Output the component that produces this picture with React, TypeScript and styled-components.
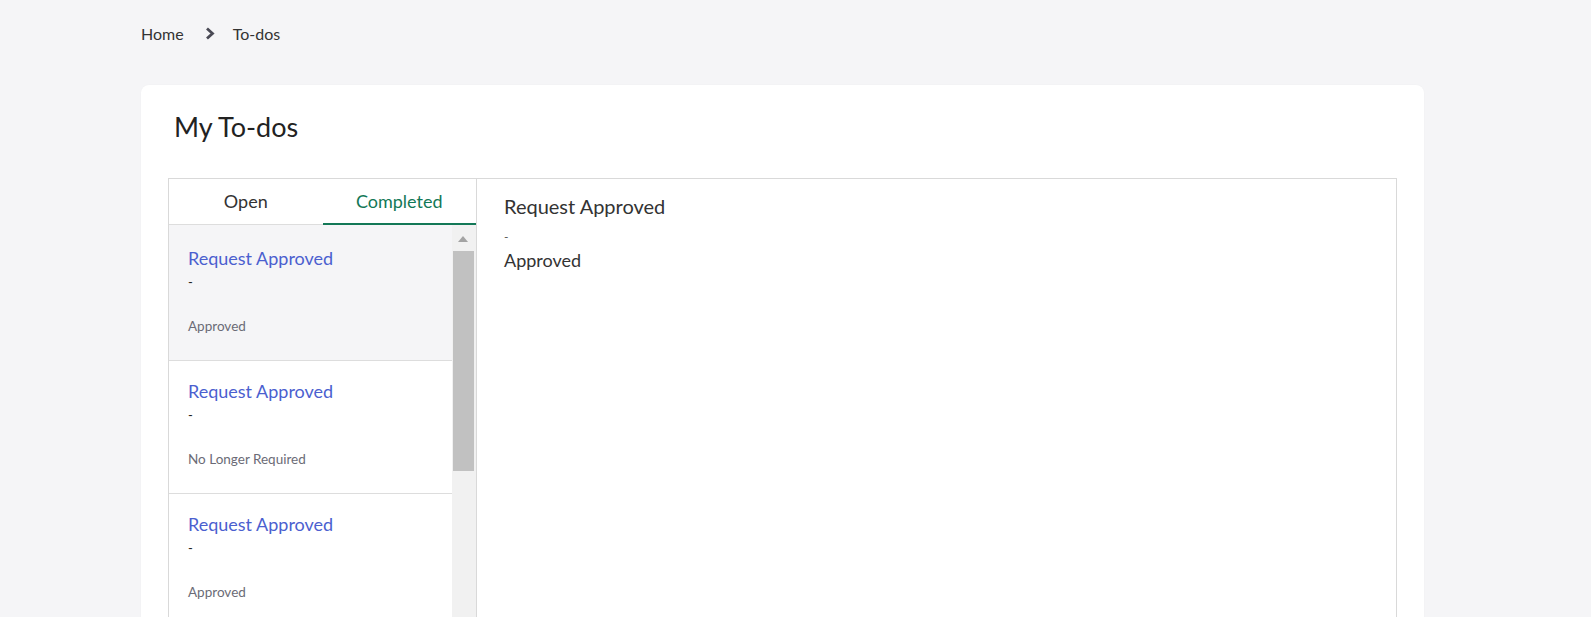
import React from "react";
import styled, { createGlobalStyle } from "styled-components";

const Global = createGlobalStyle`
  html, body { margin: 0; padding: 0; background: #f5f5f7; }
  body { font-family: Lato, "Open Sans", sans-serif; color: #222; }
  * { box-sizing: border-box; }
`;

const Page = styled.div`
  padding: 0 0 0 141px;
  width: 1424px;
`;

const Breadcrumb = styled.nav`
  display: flex;
  align-items: center;
  height: 85px;
  padding-bottom: 18px;
  font-size: 16px;
  color: #333;
`;

const Crumb = styled.span`
  display: inline-block;
`;

const Chevron = styled.span`
  display: inline-flex;
  margin: 0 18px 0 21px;
  color: #4a4a55;
`;

const Card = styled.section`
  background: #fff;
  border-radius: 8px;
  padding: 22px 27px 0 27px;
  min-height: 600px;
  box-shadow: 0 0 2px rgba(0, 0, 0, 0.03);
`;

const Title = styled.h1`
  margin: 0 0 0 6px;
  font-weight: 400;
  font-size: 27px;
  line-height: 40px;
  color: #222;
  height: 71px;
`;

const Box = styled.div`
  display: flex;
  border: 1px solid #d9d9d9;
  height: 460px;
`;

const LeftPanel = styled.div`
  width: 308px;
  flex: none;
  border-right: 1px solid #d9d9d9;
  display: flex;
  flex-direction: column;
`;

const Tabs = styled.div`
  display: flex;
  border-bottom: 1px solid #ddd;
  height: 46px;
`;

const Tab = styled.div<{ $active?: boolean }>`
  flex: 1;
  display: flex;
  align-items: center;
  justify-content: center;
  font-size: 18px;
  color: ${(p) => (p.$active ? "#137857" : "#333")};
  border-bottom: 2px solid ${(p) => (p.$active ? "#137857" : "transparent")};
  margin-bottom: -1px;
`;

const ListArea = styled.div`
  flex: 1;
  display: flex;
  overflow: hidden;
`;

const ItemList = styled.div`
  flex: 1;
  overflow: hidden;
  padding-top: 3px;
  background: linear-gradient(#f5f5f7, #f5f5f7) top / 100% 3px no-repeat;
`;

const Item = styled.div<{ $selected?: boolean }>`
  height: 133px;
  padding: 18px 18px 0 19px;
  background: ${(p) => (p.$selected ? "#f5f5f7" : "#fff")};
  border-bottom: 1px solid #ddd;
`;

const ItemTitle = styled.div`
  font-size: 18px;
  line-height: 24px;
  color: #4b5fcf;
`;

const Dash = styled.div`
  margin-top: 4px;
  font-size: 13px;
  line-height: 16px;
  color: #222;
`;

const Status = styled.div`
  margin-top: 27px;
  font-size: 13.5px;
  line-height: 18px;
  color: #6b6b76;
`;

const ScrollTrack = styled.div`
  width: 24px;
  flex: none;
  background: #f1f1f1;
  display: flex;
  flex-direction: column;
  align-items: flex-start;
`;

const ScrollButton = styled.div`
  height: 26px;
  width: 22px;
  display: flex;
  align-items: center;
  justify-content: center;
  padding-top: 2px;
`;

const Arrow = styled.span`
  width: 0;
  height: 0;
  border-left: 5.5px solid transparent;
  border-right: 5.5px solid transparent;
  border-bottom: 6px solid #a3a3a3;
`;

const Thumb = styled.div`
  width: 21px;
  margin-left: 1px;
  height: 220px;
  background: #c1c1c1;
`;

const Detail = styled.div`
  flex: 1;
  padding: 14px 27px;
`;

const DetailTitle = styled.div`
  font-size: 20px;
  line-height: 26px;
  color: #333;
`;

const DetailDash = styled.div`
  font-size: 12px;
  line-height: 18px;
  color: #555;
  margin-top: 9px;
`;

const DetailStatus = styled.div`
  font-size: 18px;
  line-height: 22px;
  margin-top: 3px;
  color: #333;
`;

const items = [
  { status: "Approved", selected: true },
  { status: "No Longer Required" },
  { status: "Approved" },
];

export default function App() {
  return (
    <>
      <Global />
      <Page>
        <Breadcrumb>
          <Crumb>Home</Crumb>
          <Chevron>
            <svg width="10" height="13" viewBox="0 0 10 13">
              <path d="M2 1.5 L7.5 6.5 L2 11.5" fill="none" stroke="currentColor" strokeWidth="2.8" strokeLinejoin="miter" />
            </svg>
          </Chevron>
          <Crumb>To-dos</Crumb>
        </Breadcrumb>
        <Card>
          <Title>My To-dos</Title>
          <Box>
            <LeftPanel>
              <Tabs>
                <Tab>Open</Tab>
                <Tab $active>Completed</Tab>
              </Tabs>
              <ListArea>
                <ItemList>
                  {items.map((it, i) => (
                    <Item key={i} $selected={it.selected}>
                      <ItemTitle>Request Approved</ItemTitle>
                      <Dash>-</Dash>
                      <Status>{it.status}</Status>
                    </Item>
                  ))}
                </ItemList>
                <ScrollTrack>
                  <ScrollButton>
                    <Arrow />
                  </ScrollButton>
                  <Thumb />
                </ScrollTrack>
              </ListArea>
            </LeftPanel>
            <Detail>
              <DetailTitle>Request Approved</DetailTitle>
              <DetailDash>-</DetailDash>
              <DetailStatus>Approved</DetailStatus>
            </Detail>
          </Box>
        </Card>
      </Page>
    </>
  );
}
